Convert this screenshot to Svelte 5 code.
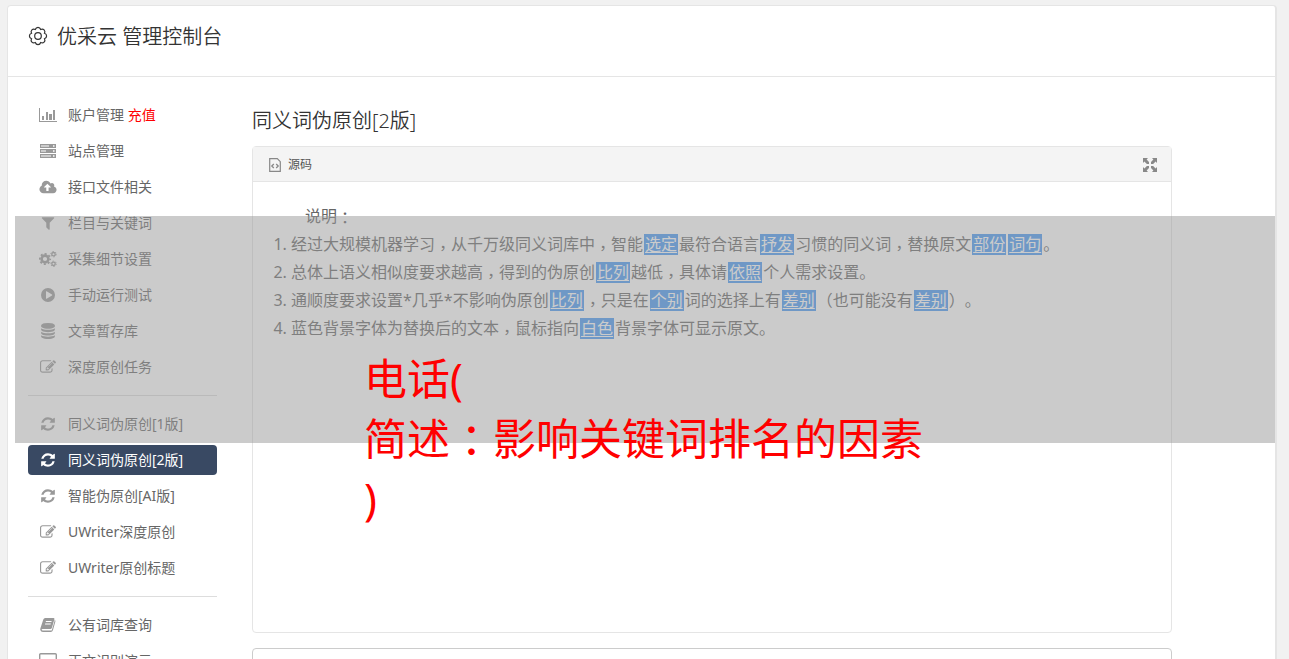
<script lang="ts">
  type Item = { icon: string; label: string; extra?: string; on?: boolean };

  // Side menu, one array per block; a rule is drawn between blocks
  const menu: Item[][] = [
    [
      { icon: 'chart', label: '账户管理', extra: '充值' },
      { icon: 'server', label: '站点管理' },
      { icon: 'cloud', label: '接口文件相关' },
      { icon: 'filter', label: '栏目与关键词' },
      { icon: 'gears', label: '采集细节设置' },
      { icon: 'play', label: '手动运行测试' },
      { icon: 'database', label: '文章暂存库' },
      { icon: 'edit', label: '深度原创任务' }
    ],
    [
      { icon: 'refresh', label: '同义词伪原创[1版]' },
      { icon: 'refresh', label: '同义词伪原创[2版]', on: true },
      { icon: 'refresh', label: '智能伪原创[AI版]' },
      { icon: 'edit', label: 'UWriter深度原创' },
      { icon: 'edit', label: 'UWriter原创标题' }
    ],
    [
      { icon: 'book', label: '公有词库查询' },
      { icon: 'desktop', label: '正文识别演示' }
    ]
  ];

  // Replaced words stand between { and }
  const notes = [
    '经过大规模机器学习，从千万级同义词库中，智能{选定}最符合语言{抒发}习惯的同义词，替换原文{部份}{词句}。',
    '总体上语义相似度要求越高，得到的伪原创{比列}越低，具体请{依照}个人需求设置。',
    '通顺度要求设置*几乎*不影响伪原创{比列}，只是在{个别}词的选择上有{差别}（也可能没有{差别}）。',
    '蓝色背景字体为替换后的文本，鼠标指向{白色}背景字体可显示原文。'
  ];

  const split = (s: string) => s.split(/(\{[^}]*\}|，)/).filter(Boolean);

  const paths: Record<string, string> = {
    filter: 'M1595 295q17 41-14 70l-493 493v742q0 42-39 59-13 5-25 5-27 0-45-19l-256-256q-19-19-19-45v-486l-493-493q-31-29-14-70 17-39 59-39h1280q42 0 59 39z',
    database: 'M896 768q237 0 443-43t325-127v170q0 69-103 128t-280 93.5-385 34.5-385-34.5-280-93.5-103-128v-170q119 84 325 127t443 43zm0 768q237 0 443-43t325-127v170q0 69-103 128t-280 93.5-385 34.5-385-34.5-280-93.5-103-128v-170q119 84 325 127t443 43zm0-384q237 0 443-43t325-127v170q0 69-103 128t-280 93.5-385 34.5-385-34.5-280-93.5-103-128v-170q119 84 325 127t443 43zm0-1152q208 0 385 34.5t280 93.5 103 128v128q0 69-103 128t-280 93.5-385 34.5-385-34.5-280-93.5-103-128v-128q0-69 103-128t280-93.5 385-34.5z',
    edit: 'M888 1184l116-116-152-152-116 116v56h96v96h56zm440-720q-16-16-33 1l-350 350q-17 17-1 33t33-1l350-350q17-17 1-33zm80 594v190q0 119-84.5 203.5t-203.5 84.5h-832q-119 0-203.5-84.5t-84.5-203.5v-832q0-119 84.5-203.5t203.5-84.5h832q63 0 117 25 15 7 18 23 3 17-9 29l-49 49q-14 14-32 8-23-6-45-6h-832q-66 0-113 47t-47 113v832q0 66 47 113t113 47h832q66 0 113-47t47-113v-126q0-13 9-22l64-64q15-15 35-7t20 29zm-96-738l288 288-672 672h-288v-288zm444 132l-92 92-288-288 92-92q28-28 68-28t68 28l152 152q28 28 28 68t-28 68z',
    refresh: 'M1639 1056q0 5-1 7-64 268-268 434.5t-478 166.5q-146 0-282.5-55t-243.5-157l-129 129q-19 19-45 19t-45-19-19-45v-448q0-26 19-45t45-19h448q26 0 45 19t19 45-19 45l-137 137q71 66 161 102t187 36q134 0 250-65t186-179q11-17 53-117 8-23 30-23h192q13 0 22.5 9.5t9.5 22.5zm25-800v448q0 26-19 45t-45 19h-448q-26 0-45-19t-19-45 19-45l138-138q-148-137-349-137-134 0-250 65t-186 179q-11 17-53 117-8 23-30 23h-199q-13 0-22.5-9.5t-9.5-22.5v-7q65-268 270-434.5t480-166.5q146 0 284 55.5t245 156.5l130-129q19-19 45-19t45 19 19 45z'
  };
</script>

{#snippet icon(name: string)}
  {#if paths[name]}
    <svg width="16" height="16" viewBox="0 0 1792 1792" fill="currentColor" aria-hidden="true"><path d={paths[name]} /></svg>
  {:else if name === 'cloud'}
    <svg width="18" height="16" viewBox="0 0 1920 1792" fill="currentColor" aria-hidden="true"><path d="M1280 928q0-14-9-23l-352-352q-9-9-23-9t-23 9l-351 351q-10 12-10 24 0 14 9 23t23 9h224v352q0 13 9.5 22.5t22.5 9.5h192q13 0 22.5-9.5t9.5-22.5v-352h224q13 0 22.5-9.5t9.5-22.5zm640 288q0 159-112.5 271.5t-271.5 112.5h-1088q-185 0-316.5-131.5t-131.5-316.5q0-130 70-240t188-165q-2-30-2-43 0-212 150-362t362-150q156 0 285.5 87t188.5 231q71-62 166-62 106 0 181 75t75 181q0 76-41 138 130 31 213.5 135.5t83.5 238.5z" /></svg>
  {:else if name === 'chart'}
    <svg width="18" height="16" viewBox="0 0 18 16" fill="currentColor" aria-hidden="true"><path d="M0 1h1v13h17v1H0zM3 9h2v4H3zM7 5h2v8H7zM10 7h3v6h-3zM14 3h2v10h-2z" /></svg>
  {:else if name === 'server'}
    <svg width="16" height="16" viewBox="0 0 16 16" fill="currentColor" fill-rule="evenodd" aria-hidden="true"><path d="M0 1h16v4H0zM1 2.5v1h8v-1zM13 2.3v1.4h1.5V2.3zM0 6h16v4H0zM1 7.5v1h5v-1zM13 7.3v1.4h1.5V7.3zM0 11h16v4H0zM1 12.5v1h10v-1zM13 12.3v1.4h1.5v-1.4z" /></svg>
  {:else if name === 'gears'}
    <svg width="18" height="16" viewBox="0 0 18 16" fill="none" stroke="currentColor" aria-hidden="true">
      <circle cx="6" cy="8" r="3.4" stroke-width="2.6" />
      <circle cx="6" cy="8" r="5.2" stroke-width="1.8" stroke-dasharray="2.04 2.04" stroke-dashoffset="1.02" />
      <circle cx="14.5" cy="3.2" r="1.7" stroke-width="1.3" />
      <circle cx="14.5" cy="3.2" r="2.7" stroke-width="1" stroke-dasharray="1.4 1.43" />
      <circle cx="14.5" cy="12.8" r="1.7" stroke-width="1.3" />
      <circle cx="14.5" cy="12.8" r="2.7" stroke-width="1" stroke-dasharray="1.4 1.43" />
    </svg>
  {:else if name === 'play'}
    <svg width="16" height="16" viewBox="0 0 16 16" fill="currentColor" fill-rule="evenodd" aria-hidden="true"><path d="M8 1a7 7 0 1 1 0 14A7 7 0 0 1 8 1zM6 4.6v6.8q0 .6.6.3l5.4-3.3q.5-.4 0-.8L6.6 4.3Q6 4 6 4.600z" /></svg>
  {:else if name === 'book'}
    <svg width="16" height="16" viewBox="0 0 16 16" fill="currentColor" fill-rule="evenodd" aria-hidden="true"><path d="M5.200 1h8.300q1.200.1.900 1.300l-2.500 8.400q-.4 1.200-1.500 1.200H2.600q-1 0-1 .7.100.9 1.300.9h8q.8 0 1-.6l2.600-8.700V3q1.300.3.900 1.600l-2.400 8.300q-.6 2-2.300 2H3Q.8 14.900.3 12.900q-.2-.8.2-1.900L3.300 2.500Q3.800 1.100 5.200 1zM6 4l-.3 1h5.700l.3-1zM5.200 6.400l-.3 1h5.700l.3-1z" /></svg>
  {:else if name === 'desktop'}
    <svg width="18" height="16" viewBox="0 0 18 16" fill="none" stroke="currentColor" aria-hidden="true"><rect x=".7" y=".7" width="16.600" height="11" rx="1" stroke-width="1.400" /><path d="M6 15h6M9 12v3" stroke-width="1.600" /></svg>
  {/if}
{/snippet}

<div class="card">
  <header>
    <svg width="20" height="20" viewBox="0 0 20 20" fill="none" stroke="currentColor" stroke-width="1.2" aria-hidden="true">
      <path d="M7.300 3.500Q8 1.400 10 1.400T12.700 3.500Q14.700 2.500 16.100 3.900T16.500 7.300Q18.600 8 18.600 10T16.500 12.700Q17.500 14.700 16.100 16.100T12.700 16.500Q12 18.600 10 18.600T7.300 16.500Q5.300 17.500 3.900 16.100T3.500 12.700Q1.400 12 1.400 10T3.500 7.300Q2.500 5.300 3.900 3.900T7.300 3.500z" />
      <circle cx="10" cy="10" r="3.300" />
    </svg>
    <h1>优采云 管理控制台</h1>
  </header>

  <div class="body">
    <nav>
      {#each menu as block, b (b)}
        {#if b > 0}<hr />{/if}
        {#each block as item (item.label)}
          <a href="#top" class="item" class:on={item.on}>
            <span class="ico">{@render icon(item.icon)}</span>
            <span class="label">{item.label}{#if item.extra}&nbsp;<em>{item.extra}</em>{/if}</span>
          </a>
        {/each}
      {/each}
    </nav>

    <main>
      <h2>同义词伪原创[2版]</h2>
      <section class="panel">
        <div class="toolbar">
          <button type="button">
            <svg width="12" height="14" viewBox="0 0 12 14" fill="none" stroke="currentColor" aria-hidden="true">
              <path d="M.7.7h7.600l3 3v9.600H.7z" stroke-width="1.200" />
              <path d="M4.800 6L2.800 8l2 2M7.200 6l2 2-2 2" stroke-width="1.300" />
            </svg>
            <span class="label">源码</span>
          </button>
          <button type="button" aria-label="全屏">
            <svg width="14" height="14" viewBox="0 0 14 14" fill="currentColor" aria-hidden="true">
              <path d="M0 0h5L3.600 1.400 6 3.900V6H3.900L1.400 3.600 0 5zM14 0v5l-1.400-1.400L10.100 6H8V3.900l2.400-2.500L9 0zM0 14V9l1.400 1.400L3.900 8H6v2.100l-2.400 2.500L5 14zM14 14H9l1.400-1.400L8 10.100V8h2.100l2.500 2.400L14 9z" />
            </svg>
          </button>
        </div>
        <div class="text">
          <p>说明<span class="mid">：</span></p>
          <ol>
            {#each notes as note, n (n)}
              <li>{#each split(note) as t, i (i)}{#if t[0] === '{'}<u>{t.slice(1, -1)}</u>{:else if t === '，'}<span class="mid comma">{t}</span>{:else}{t}{/if}{/each}</li>
            {/each}
          </ol>
        </div>
      </section>
      <textarea aria-label="原文"></textarea>
    </main>
  </div>

  <div class="banner">
    电话(<br />
    简述<span class="mid">：</span>影响关键词排名的因素<br />
    )
  </div>
</div>

<style>
  :global(body) { background: #f1f1f1; overflow: hidden; }
  .card { position: relative; margin: 5px 12px 0 7px; background: #fff; border: 1px solid #e5e5e5; border-right-width: 2px; border-radius: 4px; color: #333; font-family: "Noto Sans", "Noto Sans CJK SC", sans-serif; font-size: 14px; text-spacing-trim: space-all; }
  /* fullwidth marks centred in their square */
  .mid { font-family: "Noto Sans", "Noto Sans CJK TC", sans-serif; line-height: 1; vertical-align: -2px; }
  .comma { vertical-align: -4px; }
  header { display: flex; align-items: center; gap: 9px; height: 60px; padding: 0 20px 10px; border-bottom: 1px solid #e5e5e5; }
  h1, h2 { margin: 0; padding-top: 2px; font-size: 20px; font-weight: 350; line-height: 30px; }
  .body { display: flex; gap: 35px; padding: 23px 20px; }

  nav { flex: none; width: 189px; display: flex; flex-direction: column; gap: 6px; }
  .item { display: flex; align-items: center; gap: 10px; height: 30px; padding: 0 10px; border-radius: 4px; color: #666; text-decoration: none; white-space: nowrap; }
  .item.on { background: #394963; color: #fff; }
  .ico { display: flex; justify-content: center; width: 20px; color: #999; }
  .on .ico { color: #fff; }
  .label { padding-bottom: 2px; }
  em { font-style: normal; color: #f00; }
  hr { width: 100%; height: 1px; margin: 7px 0; border: 0; background: #ddd; }

  main { flex: 1; max-width: 920px; padding-top: 4px; }
  .panel { min-height: 485px; margin-top: 10px; border: 1px solid #e5e5e5; border-radius: 4px; }
  .toolbar { display: flex; justify-content: space-between; height: 32px; padding: 2px 14px 0 16px; background: #f4f4f4; border-bottom: 1px solid #e5e5e5; }
  .toolbar button { display: flex; align-items: center; gap: 7px; padding: 0; border: 0; background: none; color: #555; font: inherit; font-size: 12px; }
  .toolbar svg { color: #888; }
  .text { padding: 20px; color: #666; font-size: 16px; line-height: 28px; }
  p { margin: 0; text-indent: 2em; }
  ol { margin: 0; padding-left: 18px; }
  u { display: inline-block; margin: 0 1px; padding: 0 1px; background: #4699f5; color: #fff; line-height: 21px; text-underline-offset: 2px; }
  textarea { display: block; box-sizing: border-box; width: 100%; height: 120px; margin-top: 15px; border: 1px solid #ccc; border-radius: 4px; resize: none; }

  /* translucent strip over the page, its last lines run out below it */
  .banner { position: absolute; top: 210px; left: 7px; right: 0; box-sizing: border-box; height: 227px; padding: 133px 0 0 349px; background: rgba(152, 152, 152, 0.5); color: #f00; font-size: 43px; line-height: 60px; }
</style>
